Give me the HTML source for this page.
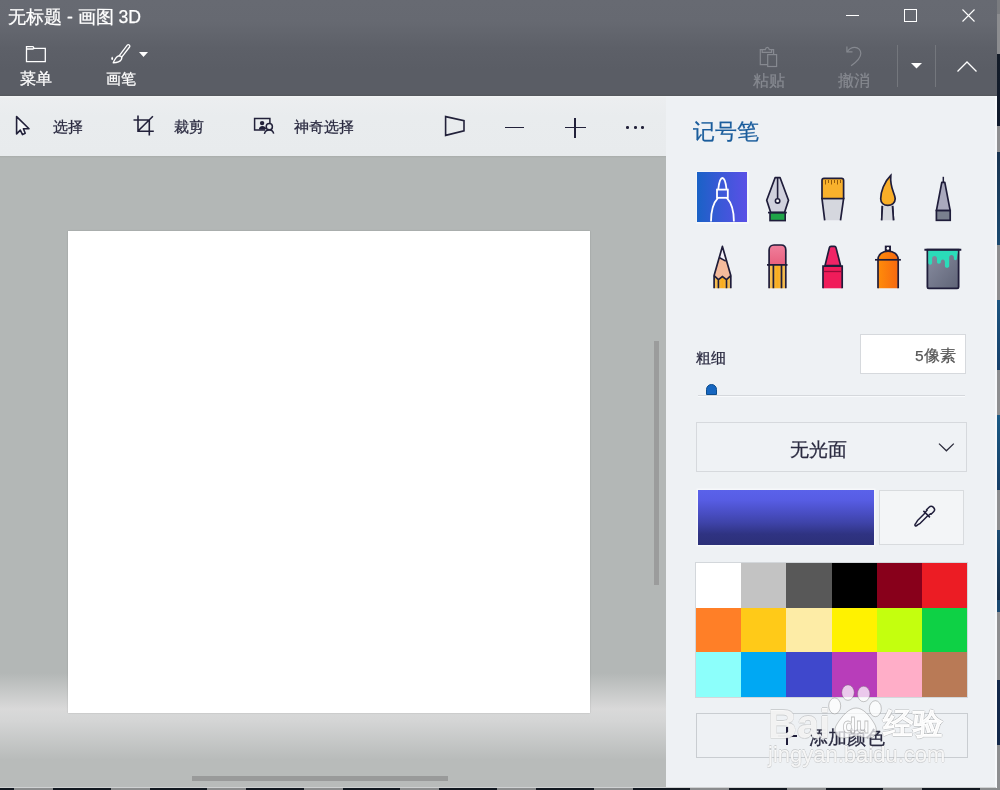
<!DOCTYPE html>
<html><head><meta charset="utf-8">
<style>
*{margin:0;padding:0;box-sizing:border-box}
html,body{width:1000px;height:790px;overflow:hidden;background:#1b2c44}
body{position:relative;font-family:"Liberation Sans",sans-serif}
.a{position:absolute}
.t{position:absolute;white-space:nowrap;line-height:1;will-change:transform;-webkit-text-stroke:0.25px currentColor}
#hdr{left:0;top:0;width:997px;height:96px;background:linear-gradient(180deg,#676a72 0px,#666971 22px,#5d6068 48px,#5a5d65 70px,#5a5d65 94px,#54575c 96px)}
#tool{left:0;top:96px;width:666px;height:60px;background:linear-gradient(180deg,#f3f5f6 0,#eceef0 2px,#e9ecee 20px,#e8ebed 60px)}
#cv{left:0;top:156px;width:666px;height:632px;background:linear-gradient(180deg,#a9adab 0px,#b3b7b6 2px,#b3b7b6 517px,#d9d9d9 553px,#d4d5d5 565px,#b8bbba 604px,#b8bbba 632px)}
#panel{left:666px;top:96px;width:331px;height:692px;background:linear-gradient(180deg,#f3f5f7 0,#eef1f4 2px,#eef1f4 100%);border-right:2px solid #f7f9fb}
#paper{left:68px;top:231px;width:522px;height:482px;background:#fff;box-shadow:0 0 1.5px rgba(0,0,0,0.18)}
svg{position:absolute;overflow:visible}
</style></head><body>
<div class="a" id="hdr"></div>
<div class="a" id="tool"></div>
<div class="a" id="cv"></div>
<div class="a" id="panel"></div>
<div class="a" id="paper"></div>

<!-- title -->
<div class="t" style="left:8px;top:9px;font-size:17.6px;color:#fff">无标题 - 画图 3D</div>

<!-- window controls -->
<div class="a" style="left:846px;top:15px;width:13px;height:1px;background:#fff"></div>
<div class="a" style="left:904px;top:9px;width:13px;height:13px;border:1px solid #fff"></div>
<svg style="left:962px;top:9px" width="13" height="13"><path d="M0.5 0.5L12.5 12.5M12.5 0.5L0.5 12.5" stroke="#fff" stroke-width="1.1"/></svg>

<!-- ribbon left -->
<svg style="left:20px;top:40px" width="30" height="28" fill="none" stroke="#fff" stroke-width="1.3"><path d="M6.5 21.6V6.7H13L14.2 8.3H25.3V21.6Z"/><path d="M6.5 9H12.8L14.2 8.3"/></svg>
<div class="t" style="left:20px;top:71px;font-size:15.5px;color:#fff">菜单</div>
<svg style="left:105px;top:40px" width="30" height="28"><line x1="23.4" y1="6.1" x2="15.6" y2="16.2" stroke="#fff" stroke-width="4.2" stroke-linecap="round"/><line x1="23.4" y1="6.1" x2="15.6" y2="16.2" stroke="#60636b" stroke-width="1.6" stroke-linecap="round"/><path d="M13.6 15.8C10.8 16.8 9.6 19.6 8.2 22.8C12 22.8 15.2 21.6 16.4 19.4C17 18.2 16.6 16.8 15.8 16.2Z" fill="#5c5f67" stroke="#fff" stroke-width="1.3" stroke-linejoin="round"/><path d="M7.1 16.6C7.9 17.4 8.3 18.5 8.1 19.3C7.9 20 6.9 20.1 6.4 19.5C6 18.9 6.4 17.6 7.1 16.6Z" fill="#fff"/></svg>
<svg style="left:139px;top:52px" width="10" height="6"><path d="M0 0H9L4.5 5Z" fill="#fff"/></svg>
<div class="t" style="left:106px;top:71px;font-size:15px;color:#fff">画笔</div>

<!-- ribbon right -->
<svg style="left:753px;top:42px" width="30" height="28" fill="none" stroke="#868990" stroke-width="1.2"><path d="M14.5 22.7H7.3V7.6H12.4C12.6 6 13.3 5.3 14.3 5.3C15.3 5.3 16 6 16.3 7.6H20.6V12.4"/><path d="M9.2 7.8V10.3H18.6V7.8"/><rect x="14.7" y="12.6" width="8.9" height="11.9"/></svg>
<div class="t" style="left:753px;top:73px;font-size:15.5px;color:#868990">粘贴</div>
<svg style="left:838px;top:42px" width="30" height="28" fill="none" stroke="#868990" stroke-width="1.2"><path d="M8.9 4.6V9.9H14.5"/><path d="M9.2 9.7C11 6.8 13.8 5.3 16.8 5.3C20.3 5.3 22.8 8 22.8 11.4C22.8 15.5 19 19.5 13.1 23.8"/></svg>
<div class="t" style="left:838px;top:73px;font-size:15.5px;color:#868990">撤消</div>
<div class="a" style="left:897px;top:45px;width:1px;height:42px;background:#74777d"></div>
<svg style="left:911px;top:63px" width="12" height="6"><path d="M0 0H11L5.5 5.5Z" fill="#fff"/></svg>
<div class="a" style="left:935px;top:45px;width:1px;height:42px;background:#74777d"></div>
<svg style="left:957px;top:61px" width="20" height="11"><path d="M0.5 10.5L10 1L19.5 10.5" stroke="#fff" fill="none" stroke-width="1.3"/></svg>


<!-- toolbar icons -->
<svg style="left:10px;top:110px" width="30" height="30"><path d="M6.6 6.6V23.9L10.3 20.1L12.5 24.6L15.2 23.2L13.4 18.8H19Z" fill="#f4f6f8" stroke="#22213a" stroke-width="1.6" stroke-linejoin="round"/></svg>
<svg style="left:128px;top:110px" width="30" height="30" fill="none" stroke="#22213a" stroke-width="1.6"><path d="M10 5.6V21.3H25.8M5.5 10H21.3V25.5M10.3 20.8L24.9 6.2"/></svg>
<svg style="left:250px;top:112px" width="30" height="28"><path d="M15 17.9H4.6V6.6H19.9V11.3" fill="none" stroke="#22213a" stroke-width="1.5"/><circle cx="12.1" cy="11.1" r="2.2" fill="#22213a"/><path d="M8.9 17.6C8.9 15.3 10.3 14 12.4 14C14.5 14 15.6 15 16 16.3L15.5 17.6Z" fill="#22213a"/><circle cx="19.3" cy="14.7" r="3.1" fill="none" stroke="#22213a" stroke-width="1.5"/><path d="M14.4 21.8C15 19.2 17 17.9 19.3 17.9C21.6 17.9 23.2 19.2 23.7 21.6" fill="none" stroke="#22213a" stroke-width="1.5"/></svg>
<svg style="left:440px;top:112px" width="30" height="30"><path d="M5.6 4.6V23.4L24 18.8V8.6Z" fill="none" stroke="#22213a" stroke-width="1.6"/></svg>
<div class="a" style="left:505px;top:126.6px;width:19px;height:1.6px;background:#22213a"></div>
<div class="a" style="left:565px;top:126.6px;width:20.5px;height:1.6px;background:#22213a"></div>
<div class="a" style="left:574.4px;top:118px;width:1.6px;height:20.4px;background:#22213a"></div>
<div class="a" style="left:626.4px;top:126.2px;width:2.7px;height:2.7px;border-radius:50%;background:#22213a"></div>
<div class="a" style="left:633.9px;top:126.2px;width:2.7px;height:2.7px;border-radius:50%;background:#22213a"></div>
<div class="a" style="left:641.4px;top:126.2px;width:2.7px;height:2.7px;border-radius:50%;background:#22213a"></div>

<!-- toolbar -->
<div class="t" style="left:53px;top:119px;font-size:15px;color:#2a2a40">选择</div>
<div class="t" style="left:174px;top:119px;font-size:15px;color:#2a2a40">裁剪</div>
<div class="t" style="left:294px;top:119px;font-size:15.2px;color:#2a2a40">神奇选择</div>

<!-- panel -->
<div class="t" style="left:693px;top:121px;font-size:22.3px;color:#1b5d9c">记号笔</div>

<div class="t" style="left:696px;top:350px;font-size:15px;color:#2a2a40">粗细</div>
<div class="a" style="left:860px;top:334px;width:106px;height:40px;background:#fff;border:1px solid #d6d9dd"></div>
<div class="t" style="left:915px;top:348px;font-size:15.5px;color:#555">5像素</div>
<div class="a" style="left:698px;top:394.5px;width:267px;height:1.5px;background:#d5d8dc"></div><div class="a" style="left:698px;top:396px;width:267px;height:1px;background:#f8fafc"></div>
<div class="a" style="left:706px;top:384px;width:10.5px;height:10.5px;background:#1666c0;border:1px solid #0c4c8c;border-radius:5.5px 5.5px 0 0"></div>

<div class="a" style="left:696px;top:422px;width:271px;height:50px;border:1px solid #d6d9dd;background:#eff2f5"></div>
<div class="t" style="left:790px;top:440px;font-size:19px;color:#2a2a40">无光面</div>
<svg style="left:939px;top:442.5px" width="17" height="10"><path d="M0 0.6L7.4 7.8L14.8 0.6" stroke="#2b2b3b" fill="none" stroke-width="1.3"/></svg>

<div class="a" style="left:698px;top:490px;width:176px;height:55px;background:linear-gradient(180deg,#5a62ea 0%,#575de4 18%,#4a4fc6 40%,#3e43a8 60%,#2f3382 80%,#2c3078 100%);box-shadow:0 0 0 1.5px #f6f8fa"></div>
<div class="a" style="left:879px;top:490px;width:85px;height:55px;background:#f3f5f7;border:1px solid #d8dbde"></div>

<div class="a" style="left:695px;top:562px;width:273px;height:136px;border:1px solid #d3d7db"></div>
<div class="a" style="left:696px;top:563px;width:271px;height:134px;display:grid;grid-template-columns:repeat(6,1fr);grid-template-rows:repeat(3,1fr)">
<div style="background:#ffffff"></div><div style="background:#c3c3c3"></div><div style="background:#585858"></div><div style="background:#000000"></div><div style="background:#88001b"></div><div style="background:#ec1c24"></div>
<div style="background:#ff7f27"></div><div style="background:#ffca18"></div><div style="background:#fdeca6"></div><div style="background:#fff200"></div><div style="background:#c4ff0e"></div><div style="background:#0ed145"></div>
<div style="background:#8cfffb"></div><div style="background:#00a8f3"></div><div style="background:#3f48cc"></div><div style="background:#b83dba"></div><div style="background:#ffaec8"></div><div style="background:#b97a56"></div>
</div>

<div class="a" style="left:696px;top:713px;width:272px;height:45px;border:1px solid #c9cdd1"></div>
<div class="t" style="left:809px;top:729px;font-size:18.5px;color:#2a2a40">添加颜色</div>


<!-- brush icons -->
<div class="a" style="left:695.5px;top:170.5px;width:53px;height:53px;background:#f4f6f9"></div>
<div class="a" style="left:697px;top:172px;width:50px;height:50px;background:linear-gradient(90deg,#1a62c6,#3c58d8 50%,#5a50e6)"></div>
<svg style="left:697px;top:172px" width="50" height="50" fill="none" stroke="#fff" stroke-width="1.8"><path d="M21.3 17C22 11 23.5 6 25.4 6C27.3 6 28.8 11 29.5 17"/><rect x="20" y="17.6" width="10.8" height="8.2"/><path d="M21 25.8C17 30 14 36 14 49.4M29.8 25.8C33.8 30 36.9 36 36.9 49.4"/></svg>

<svg style="left:760px;top:172px" width="35" height="50"><path d="M15.1 5.7H20.1L28.5 28.2L24.5 40.6H10.7L6.7 28.2Z" fill="#d0d1dd" stroke="#1f1d3a" stroke-width="1.7" stroke-linejoin="round"/><path d="M17.6 5.7V26.6" stroke="#1f1d3a" stroke-width="1.6"/><circle cx="17.6" cy="28.9" r="2.2" fill="#fff" stroke="#1f1d3a" stroke-width="1.6"/><rect x="10" y="40.6" width="15.2" height="8" fill="#1fa448" stroke="#1f1d3a" stroke-width="1.6"/><path d="M8 40.6H26.8" stroke="#1f1d3a" stroke-width="1.7"/></svg>

<svg style="left:815px;top:172px" width="35" height="50"><path d="M9.7 48.3L7 26.5H28.6L25.5 48.3" fill="#d5d7de" stroke="#1f1d3a" stroke-width="1.7"/><path d="M7 26.5V8.6C7 7.2 7.8 6.4 9 6.4H26.6C27.8 6.4 28.6 7.2 28.6 8.6V26.5Z" fill="#f9b12c" stroke="#1f1d3a" stroke-width="1.7"/><path d="M10.5 8V12.5M13.5 8V11M16.5 8V12.5M19.5 8V11M22.5 8V12.5M25.5 8V11" stroke="#8a5208" stroke-width="0.9"/></svg>

<svg style="left:870px;top:172px" width="35" height="50"><path d="M12.4 33.9L11.7 48.3M22.5 33.9L23.5 48.3" stroke="#1f1d3a" stroke-width="1.7"/><path d="M12.4 33.9H22.5L23.4 48.3H11.8Z" fill="#d5d7de"/><path d="M12.4 33.9L11.7 48.3M22.5 33.9L23.5 48.3" stroke="#1f1d3a" stroke-width="1.7"/><path d="M20.8 3.4C14 10 10.7 20 10.7 26.8C10.7 31 13.8 33.4 17.8 33.4C22 33.4 25.2 30.6 25.2 26.8C25.2 21.5 19.6 16.5 20.8 3.4Z" fill="#f9ae28" stroke="#1f1d3a" stroke-width="1.7"/></svg>

<svg style="left:925px;top:172px" width="35" height="50"><path d="M18.3 4.8V10.4" stroke="#1f1d3a" stroke-width="1.5"/><path d="M16.8 10.4H19.8L25.2 38.6H11.4Z" fill="#a9a9bd" stroke="#1f1d3a" stroke-width="1.7" stroke-linejoin="round"/><rect x="11.4" y="38.6" width="13.8" height="9.7" fill="#7a808e" stroke="#1f1d3a" stroke-width="1.7"/></svg>

<svg style="left:705px;top:240px" width="35" height="50"><defs><linearGradient id="pc" x1="0" x2="1"><stop offset="0" stop-color="#f5c25e"/><stop offset="0.5" stop-color="#f9ad1e"/><stop offset="1" stop-color="#f5c25e"/></linearGradient></defs><path d="M9.1 48.3V35.6L17.4 6.4L25.8 35.6V48.3Z" fill="url(#pc)"/><path d="M9.1 35.6L14.8 17.8L20.8 21.1L25.8 35.6L21.5 39.6L17.4 36.6L13.4 39.6Z" fill="#f4bb9c"/><path d="M17.4 6.4L14.8 17.8L20.8 21.1Z" fill="#f4f2fb"/><path d="M9.1 48.3V35.6L17.4 6.4L25.8 35.6V48.3" fill="none" stroke="#1f1d3a" stroke-width="1.7" stroke-linejoin="round"/><path d="M14.6 17.8L20.8 21.1M9.1 35.6L13.4 39.6L17.4 36.6L21.5 39.6L25.8 35.6M13.4 39.6V48.3M21.5 39.6V48.3" fill="none" stroke="#1f1d3a" stroke-width="1.6"/></svg>

<svg style="left:760px;top:240px" width="35" height="50"><defs><linearGradient id="er" x1="0" y1="0" x2="0" y2="1"><stop offset="0" stop-color="#f07f9c"/><stop offset="1" stop-color="#e8607e"/></linearGradient></defs><path d="M9.1 24.8V10C9.1 7 11.2 5 14 5H21C23.8 5 25.8 7 25.8 10V24.8Z" fill="url(#er)" stroke="#1f1d3a" stroke-width="1.7"/><path d="M9.1 24.8H25.8V48.3H9.1Z" fill="url(#pc)"/><path d="M9.1 24.8V48.3M25.8 24.8V48.3M7 24.8H27.5M13.4 24.8V48.3M21.5 24.8V48.3" stroke="#1f1d3a" stroke-width="1.7"/></svg>

<svg style="left:815px;top:240px" width="35" height="50"><path d="M10 25.6L14.4 7.6C14.6 6.8 15.2 6.4 16 6.4H19.4C20.2 6.4 20.8 6.8 21 7.6L25.6 25.6Z" fill="#f02466" stroke="#1f1d3a" stroke-width="1.7" stroke-linejoin="round"/><path d="M8 26.2H27.2V48.3H8Z" fill="#f01c5a"/><path d="M8 48.3V26.2H27.2V48.3" fill="none" stroke="#1f1d3a" stroke-width="1.7"/><path d="M8.8 31.5H26.4" stroke="#9a0c3a" stroke-width="1.3"/></svg>

<svg style="left:870px;top:240px" width="35" height="50"><defs><linearGradient id="sp" x1="0" x2="1"><stop offset="0" stop-color="#ff8c0a"/><stop offset="1" stop-color="#f7680f"/></linearGradient></defs><rect x="14.8" y="5.6" width="6.2" height="5.6" fill="#1f1d3a"/><circle cx="17.9" cy="8.4" r="1.3" fill="#fff"/><path d="M8 48.3V19.8C8 14.5 12.5 11.1 18.1 11.1C23.7 11.1 28.2 14.5 28.2 19.8V48.3Z" fill="url(#sp)"/><path d="M8 48.3V19.8C8 14.5 12.5 11.1 18.1 11.1C23.7 11.1 28.2 14.5 28.2 19.8V48.3" fill="none" stroke="#1f1d3a" stroke-width="1.7"/><path d="M5 19.8H30.9" stroke="#1f1d3a" stroke-width="1.7"/></svg>

<svg style="left:920px;top:240px" width="46" height="50"><defs><linearGradient id="bk" x1="0" y1="0" x2="1" y2="1"><stop offset="0" stop-color="#8b8fa2"/><stop offset="1" stop-color="#5f6477"/></linearGradient></defs><path d="M7.4 9.7V47C7.4 47.8 8 48.3 8.8 48.3H37.2C38 48.3 38.6 47.8 38.6 47V9.7Z" fill="url(#bk)" stroke="#1f1d3a" stroke-width="1.8"/><path d="M8.3 10.6H37.7V13C37.2 14 37 18 36.9 18.6C36.8 19.6 36.2 20.2 35.4 20.2C34.6 20.2 33.9 19.6 33.9 18.6V17.6C33.9 16 32.8 15 31.5 15C30.2 15 29.2 16 29.2 17.6V26C29.2 27 28.2 27.8 27 27.8C25.8 27.8 24.9 27 24.9 26V22C24.9 20.5 24 19.5 22.8 19.5C21.6 19.5 20.8 20.5 20.8 22C20.8 23 20 23.7 18.9 23.7C17.8 23.7 17 23 17 22V18.5C17 17 16 16 14.6 16C13.2 16 12.1 17 12.1 18.5V22.8C12.1 24 11.2 24.8 10.2 24.8C9.2 24.8 8.3 24 8.3 22.8Z" fill="#2bdcb9"/><path d="M4.4 9.7H41.3" stroke="#1f1d3a" stroke-width="2"/></svg>

<!-- eyedropper -->
<svg style="left:905px;top:500px" width="35" height="35"><g transform="translate(10.2 25.6) rotate(-45)" fill="none" stroke="#1f1d3a" stroke-width="1.5" stroke-linejoin="round"><path d="M16.2 -1.9H5.2L2.2 -1.2C0.6 -1.2 0 -0.6 0 0C0 0.6 0.6 1.2 2.2 1.2L5.2 1.9H16.2"/><path d="M16.2 -4.6V4.6M16.2 -2.4H19.2V-3.2H22.8C24.8 -3.2 25.8 -1.8 25.8 0C25.8 1.8 24.8 3.2 22.8 3.2H19.2V2.4H16.2"/></g></svg>

<!-- add plus -->
<div class="a" style="left:786px;top:727px;width:2.2px;height:18px;background:#1f1d3a"></div>
<div class="a" style="left:778px;top:734.5px;width:19px;height:2.2px;background:#1f1d3a"></div>

<!-- scrollbars -->
<div class="a" style="left:654px;top:341px;width:5px;height:244px;background:#9b9c9c"></div>
<div class="a" style="left:192px;top:776px;width:256px;height:5px;background:#999a9a"></div>



<!-- watermark -->
<div class="t" id="wm1" style="left:768px;top:704px;font-size:40px;font-weight:bold;color:rgba(255,255,255,0.88);text-shadow:0.6px 0 0 rgba(120,120,120,0.28),-0.6px 0 0 rgba(120,120,120,0.28),0 0.6px 0 rgba(120,120,120,0.28),0 -0.6px 0 rgba(120,120,120,0.28)">Bai</div>
<svg style="left:820px;top:680px" width="70" height="70"><g fill="rgba(255,255,255,0.72)" stroke="rgba(100,100,100,0.4)" stroke-width="0.9"><ellipse cx="28" cy="12.6" rx="6.2" ry="7.7"/><ellipse cx="43.7" cy="14" rx="6.2" ry="7.7"/><ellipse cx="14.7" cy="25.9" rx="6" ry="8"/><ellipse cx="55.3" cy="28.7" rx="6" ry="8"/><path d="M36 28C43 28 49 35 54 43C58 49 57 58 49 58C43 58 41 56 36 56C31 56 29 58 23 58C15 58 13 50 17 44C22 36 29 28 36 28Z"/></g><text x="22.5" y="53" font-family="Liberation Sans" font-size="22" font-weight="bold" fill="rgba(255,255,255,0.5)" stroke="rgba(100,100,100,0.4)" stroke-width="0.8">du</text></svg>
<div class="t" id="wm2" style="left:883px;top:709px;font-size:29.5px;font-weight:bold;color:rgba(255,255,255,0.9);text-shadow:0.6px 0 0 rgba(120,120,120,0.28),-0.6px 0 0 rgba(120,120,120,0.28),0 0.6px 0 rgba(120,120,120,0.28),0 -0.6px 0 rgba(120,120,120,0.28)">经验</div>
<div class="t" id="wm3" style="left:768px;top:744px;font-size:22px;color:rgba(255,255,255,0.9);text-shadow:0.6px 0 0 rgba(120,120,120,0.28),-0.6px 0 0 rgba(120,120,120,0.28),0 0.6px 0 rgba(120,120,120,0.28),0 -0.6px 0 rgba(120,120,120,0.28)">jingyan.baidu.com</div>
<!-- right edge desktop strip -->
<div class="a" style="left:997px;top:0;width:3px;height:790px;background:linear-gradient(180deg,#7a7c80 0,#7a7c80 14px,#8c8d90 14px,#8c8d90 54px,#141c28 54px,#0f1a2c 126px,#8e8f91 126px,#8e8f91 152px,#193450 152px,#1a4a70 245px,#8c8d8f 245px,#8c8d8f 300px,#1c5580 300px,#16406a 370px,#8d8e90 370px,#8d8e90 415px,#1a5a85 415px,#163e66 490px,#8d8e90 490px,#8d8e90 530px,#1b4c74 530px,#142c48 600px,#1a4a72 600px,#1a4a72 612px,#8d8e90 612px,#8d8e90 680px,#12284a 680px,#12284a 745px,#8d8e90 745px,#8d8e90 790px)"></div>
<!-- bottom desktop strip -->
<div class="a" style="left:0;top:787px;width:996px;height:1px;background:#cfd1d2"></div>
<div class="a" style="left:0;top:788px;width:1000px;height:2px;background:repeating-linear-gradient(90deg,#121820 0,#121820 14px,#8a8c8d 14px,#8a8c8d 53px,#121820 53px,#121820 96.6px)"></div>

</body></html>
